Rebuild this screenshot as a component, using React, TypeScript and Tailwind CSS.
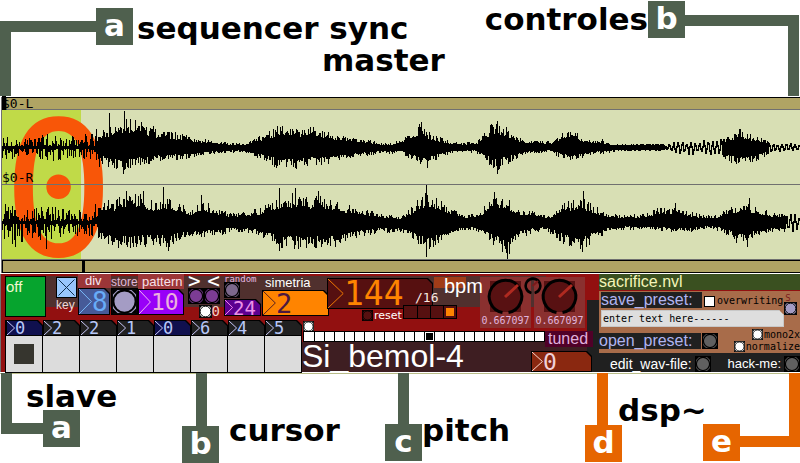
import React, { useState } from "react";

type Point = [number, number];

const MONO = "font-['DejaVu_Sans_Mono','Liberation_Mono',monospace]";
const SANS = "font-['Liberation_Sans',Arial,sans-serif]";

const LEFT_TOP: Point[] = [[0, 10], [20, 9], [40, 12], [60, 11], [80, 10], [90, 14], [100, 16], [107, 18], [115, 24], [135, 26], [150, 18], [165, 14], [180, 13], [195, 8], [210, 7], [230, 4], [245, 3], [255, 9], [265, 12], [275, 19], [285, 22], [295, 21], [303, 15], [312, 20], [322, 16], [335, 12], [350, 9], [365, 7], [380, 4], [390, 4], [400, 6], [410, 14], [420, 21], [430, 13], [440, 9], [450, 5], [460, 4], [476, 5], [484, 15], [490, 21], [497, 24], [505, 19], [515, 10], [525, 6], [535, 6], [550, 5], [555, 8], [560, 13], [575, 14], [582, 9], [590, 6], [602, 7], [610, 3], [640, 3], [662, 3], [680, 6], [700, 6], [720, 8], [731, 12], [739, 17], [745, 14], [755, 10], [765, 7], [775, 4], [800, 3]];
const LEFT_BOTTOM: Point[] = [[0, 10], [20, 9], [40, 11], [60, 13], [80, 10], [95, 11], [110, 18], [124, 22], [135, 18], [150, 14], [165, 12], [180, 11], [195, 8], [215, 5], [240, 4], [255, 9], [265, 12], [275, 18], [285, 20], [295, 21], [310, 16], [320, 17], [335, 12], [350, 9], [365, 8], [380, 5], [400, 5], [410, 10], [420, 16], [430, 15], [440, 9], [450, 5], [475, 4], [483, 10], [490, 17], [497, 21], [505, 16], [515, 11], [525, 6], [550, 4], [560, 9], [572, 13], [580, 10], [590, 7], [605, 5], [620, 3], [660, 3], [680, 7], [700, 7], [720, 9], [735, 15], [745, 16], [755, 12], [765, 8], [775, 4], [800, 3]];
const RIGHT_TOP: Point[] = [[0, 17], [15, 17], [30, 12], [50, 15], [70, 12], [85, 12], [98, 18], [105, 22], [115, 20], [127, 27], [142, 25], [150, 19], [163, 23], [175, 20], [190, 13], [205, 19], [220, 11], [235, 8], [250, 10], [265, 15], [275, 22], [285, 26], [300, 25], [315, 24], [330, 22], [345, 16], [360, 13], [380, 8], [400, 5], [410, 13], [420, 22], [427, 28], [440, 20], [455, 12], [465, 7], [478, 9], [490, 21], [500, 26], [510, 19], [520, 12], [535, 10], [550, 7], [560, 15], [570, 20], [583, 22], [595, 14], [605, 10], [615, 7], [640, 7], [660, 13], [675, 15], [690, 10], [705, 6], [717, 6], [725, 12], [740, 18], [750, 17], [762, 12], [775, 9], [790, 8], [800, 7]];
const RIGHT_BOTTOM: Point[] = [[0, 14], [15, 21], [30, 15], [50, 19], [70, 12], [85, 11], [100, 17], [115, 22], [130, 24], [145, 22], [160, 21], [170, 23], [180, 15], [200, 15], [220, 11], [235, 8], [250, 9], [265, 16], [280, 24], [300, 24], [320, 22], [335, 23], [350, 16], [365, 12], [380, 9], [400, 9], [410, 14], [420, 22], [427, 28], [437, 22], [447, 13], [460, 9], [475, 7], [485, 15], [500, 24], [508, 30], [520, 14], [530, 10], [545, 7], [560, 17], [570, 22], [583, 24], [595, 16], [610, 8], [625, 6], [650, 6], [675, 9], [690, 8], [710, 5], [725, 10], [735, 18], [745, 20], [755, 12], [765, 10], [780, 8], [800, 8]];

const LEFT_SPIKES: Record<number, [number, number]> = { 96: [18, 12], 99: [10, 19], 109: [34, 14], 124: [36, 22], 123: [18, 26], 135: [27, 17], 153: [21, 12], 420: [20, 16], 421: [25, 14], 427: [12, 20], 497: [26, 26], 506: [20, 12], 739: [18, 14] };
const RIGHT_SPIKES: Record<number, [number, number]> = { 15: [12, 24], 46: [10, 26], 126: [31, 22], 143: [31, 14], 163: [35, 20], 168: [18, 28], 201: [27, 14], 279: [34, 28], 295: [34, 22], 318: [31, 18], 426: [37, 34], 507: [16, 37], 494: [30, 18], 582: [14, 29], 583: [31, 18], 675: [19, 8], 747: [15, 24], 749: [24, 12] };

function level(points: Point[], x: number) {
  const i = points.findIndex((p) => p[0] >= x);
  if (i <= 0) return points[i === 0 ? 0 : points.length - 1][1];
  const [x0, y0] = points[i - 1];
  const [x1, y1] = points[i];
  return y0 + ((y1 - y0) * (x - x0)) / (x1 - x0);
}

function wave(top: Point[], bottom: Point[], spikes: Record<number, [number, number]>, centre: number, seed: number, loose: number, thin: (x: number) => boolean) {
  let s = seed;
  const rnd = () => {
    s = (s * 16807) % 2147483647;
    return s / 2147483647;
  };
  let d = "";
  let last = 0;
  for (let x = 2; x < 800; x++) {
    const floor = x < loose ? 0.05 : 0.55;
    let up = level(top, x) * (floor + (1.12 - floor) * Math.pow(rnd(), 1.5));
    let down = level(bottom, x) * (floor + (1.12 - floor) * Math.pow(rnd(), 1.5));
    if (thin(x)) {
      const next = Math.sin(x * 1.45) * level(top, x) * (0.4 + 0.7 * rnd());
      up = Math.max(last, next) + 0.5;
      down = -Math.min(last, next) + 0.5;
      last = next;
    }
    if (spikes[x]) [up, down] = spikes[x];
    d += `M${x - 1.5} ${Math.round(centre - up)}V${Math.round(centre + down) + 1}`;
  }
  return d;
}

const LEFT_WAVE = wave(LEFT_TOP, LEFT_BOTTOM, LEFT_SPIKES, 37, 4211, 98, (x) => (x > 664 && x < 722) || x > 768);
const RIGHT_WAVE = wave(RIGHT_TOP, RIGHT_BOTTOM, RIGHT_SPIKES, 112, 977, 98, (x) => x > 785);

function Badge({ letter, orange }: { letter: string; orange?: boolean }) {
  return (
    <span className={`flex size-[37px] shrink-0 items-center justify-center pb-1 text-[31px] leading-8 font-bold text-white ${orange ? "bg-[#e66500]" : "bg-[#4f604e]"}`}>
      {letter}
    </span>
  );
}

const CUT = "[clip-path:polygon(0_0,calc(100%_-_5px)_0,100%_5px,100%_100%,0_100%)]";

function NumBox({ label, id, value, box, fill, text, arrow }: { label?: string; id?: string; value: string; box: string; fill: string; text: string; arrow: string }) {
  return (
    <span className={`flex shrink-0 bg-black p-px ${CUT} ${box}`}>
      <span className={`flex min-w-0 flex-1 ${CUT} ${fill}`}>
        <svg viewBox="0 0 10 20" preserveAspectRatio="none" className={`h-full shrink-0 ${arrow}`} fill="none" stroke="currentColor" aria-hidden="true">
          <path d="M0 0L9.5 10L0 20" vectorEffect="non-scaling-stroke" />
        </svg>
        <input id={id} aria-label={label} defaultValue={value} className={`h-full w-0 min-w-0 flex-1 bg-transparent p-0 outline-none ${MONO} ${text}`} />
      </span>
    </span>
  );
}

function Bang({ label, id, size, fill }: { label?: string; id?: string; size: string; fill: string }) {
  return (
    <button id={id} aria-label={label} className={`shrink-0 ${size} ${fill}`}>
      <svg viewBox="0 0 16 16" className="block size-full" fill="none" stroke="#000">
        <rect x="0.5" y="0.5" width="15" height="15" strokeWidth="1.3" />
        <circle cx="8" cy="8" r="6.6" strokeWidth="1.2" />
        <path d="M1 4V1H4zM12 1H15V4zM1 12V15H4zM15 12V15H12z" fill="#000" stroke="none" />
      </svg>
    </button>
  );
}

function Knob({ label }: { label: string }) {
  return (
    <label className="relative flex h-[51px] w-[51px] shrink-0 flex-col items-center bg-[#8a302f]">
      <svg viewBox="0 0 51 38" className="h-[38px] w-[51px]" fill="none">
        <rect x="10" y="4" width="31" height="31" fill="#581112" />
        <path d="M22.5 35.5A16.3 16.3 0 1 1 28.5 35.5" stroke="#000" strokeWidth="3" />
        <path d="M25 20L38 8" stroke="#b02a20" strokeWidth="3" />
      </svg>
      <span className={`text-[10px] leading-3 text-[#e0b4dc] ${MONO}`}>0.667097</span>
      <input type="range" aria-label={label} min="0" max="1" step="0.000001" defaultValue="0.667097" className="absolute inset-0 size-full opacity-0" />
    </label>
  );
}

const STEPS = ["0", "2", "2", "1", "0", "6", "4", "5"];

function Steps() {
  return (
    <div className="flex w-[297px] shrink-0 border-l border-black">
      {STEPS.map((n, i) => (
        <div key={i} className="flex w-[37px] flex-col">
          <NumBox
            label={`Step ${i + 1} value`}
            value={n}
            box="h-4 w-full"
            fill={i % 4 === 0 ? "bg-[#10104e]" : "bg-[#202020]"}
            arrow="w-[8px] text-[#c8c8f8]"
            text="text-[17px] leading-4 text-[#b8c8f8]"
          />
          <span className="flex h-[37px] items-center justify-center border-r border-b border-black bg-[#dcdcdc]">
            <input type="checkbox" aria-label={`Step ${i + 1}`} defaultChecked={i === 0} className="size-5 appearance-none checked:bg-[#36352e]" />
          </span>
        </div>
      ))}
    </div>
  );
}

function Sequencer() {
  const [note, setNote] = useState(12);
  return (
    <div className="flex w-[586px] shrink-0 flex-col bg-[#921010] pl-1">
      <div className="flex h-[46px] items-start bg-[linear-gradient(#50302e,#50302e)] bg-[length:541px_31px] bg-[position:0_2px] bg-no-repeat">
        <button className={`mt-0.5 flex h-[41px] w-[41px] shrink-0 items-start border border-black bg-[#06a42e] pt-0.5 text-[15px] leading-4 text-[#f4f8d0] ${SANS}`}>off</button>
        <div className="mt-[3px] ml-2.5 flex w-[22px] shrink-0 flex-col">
          <label htmlFor="key" className="relative block h-[21px] w-[21px] border border-black bg-[#98c6fc]">
            <input id="key" type="checkbox" defaultChecked className="absolute size-full appearance-none opacity-0" />
            <svg viewBox="0 0 19 19" className="block size-full" stroke="#103050"><path d="M1.5 1.5L17.5 17.5M17.5 1.5L1.5 17.5" /></svg>
          </label>
          <label htmlFor="key" className={`text-[12px] leading-[14px] text-[#f0d8d8] ${SANS}`}>key</label>
        </div>
        <div className={`flex w-[33px] shrink-0 flex-col text-[13px] leading-[14px] text-[#f8e8f0] ${SANS}`}>
          <label htmlFor="div" className="h-3.5 bg-[#9c3638] pl-[7px]">div</label>
          <NumBox id="div" value="8" box="h-[27px] w-8" fill="bg-[#465a98]" arrow="w-[13px] text-[#78b8f8]" text="text-[26px] leading-6 text-[#68acf8]" />
        </div>
        <div className={`flex w-[27px] shrink-0 flex-col text-[12px] leading-[14px] whitespace-nowrap text-[#e0b8d8] ${SANS}`}>
          <label htmlFor="store" className="h-3.5 pt-px">store</label>
          <Bang id="store" size="size-[27px]" fill="bg-[#a49cc4]" />
        </div>
        <div className={`flex w-[46px] shrink-0 flex-col text-[13px] leading-[14px] whitespace-nowrap text-[#f8e0e8] ${SANS}`}>
          <label htmlFor="pattern" className="h-[15px] bg-[#9c3638] pt-px pl-1">pattern</label>
          <NumBox id="pattern" value="10" box="h-[26px] w-[46px]" fill="bg-[#9800f8]" arrow="w-[12px] text-[#f0b8f0]" text="text-[23px] leading-6 text-[#ecb0dc]" />
        </div>
        <div className="ml-1 flex w-8 shrink-0 flex-col">
          <span className={`flex h-3.5 items-center justify-between text-[21px] leading-3.5 text-white ${MONO}`}><span>&gt;</span><span>&lt;</span></span>
          <span className="flex">
            <Bang label="Next pattern" size="size-4" fill="bg-[#7c3c94]" />
            <Bang label="Previous pattern" size="size-4" fill="bg-[#7c3c94]" />
          </span>
          <span className={`flex items-center justify-end text-[14px] leading-[14px] text-[#f0d0c8] ${MONO}`}>
            <Bang label="Reset pattern" size="size-[13px]" fill="bg-white" />0
          </span>
        </div>
        <div className="ml-1 flex w-[38px] shrink-0 flex-col">
          <label htmlFor="random" className={`h-2 text-[9px] leading-[10px] text-[#e8b8e0] ${MONO}`}>random</label>
          <Bang label="Random" size="size-4" fill="bg-[#7c688c]" />
          <NumBox id="random" value="24" box="mt-px h-[17px] w-[37px]" fill="bg-[#5c0090]" arrow="w-[8px] text-[#f080f0]" text="text-[19px] leading-4 text-[#ec90e8]" />
        </div>
        <div className="flex w-[67px] shrink-0 flex-col">
          <label htmlFor="simetria" className={`h-4 pt-0.5 pl-[3px] text-[13px] leading-[14px] text-white ${SANS}`}>simetria</label>
          <NumBox id="simetria" value="2" box="h-[26px] w-[67px]" fill="bg-[#ff8400]" arrow="w-[13px] text-[#582020]" text="text-[27px] leading-6 text-[#4c1840]" />
        </div>
        <div className="relative mt-1 -ml-0.5 flex w-[130px] shrink-0 flex-col">
          <NumBox id="bpm" value="144" box="h-[31px] w-[106px]" fill="bg-[#561010]" arrow="w-[16px] text-[#f07800]" text="text-[33px] leading-[30px] text-[#ff8400]" />
          <label htmlFor="reset" className="flex items-center gap-px pl-[35px] text-[11px] leading-[13px] text-white">
            <Bang id="reset" size="size-[11px]" fill="bg-[#561010]" />reset
          </label>
          <span className={`absolute top-[13px] left-[88px] text-[13px] leading-[14px] text-[#f8e8e0] ${MONO}`}>/16</span>
          <div role="radiogroup" aria-label="Division" className="absolute top-[27px] right-0 flex border border-black bg-[#561010]">
            {[4, 8, 12, 16].map((n) => (
              <label key={n} className="flex h-3 w-[13px] items-center justify-center border-l border-black first:border-0">
                <input type="radio" name="division" aria-label={`/${n}`} defaultChecked={n === 16} className="size-2 appearance-none checked:bg-[#ff8400]" />
              </label>
            ))}
          </div>
        </div>
        <div className="mt-[3px] -ml-[23px] flex w-[46px] shrink-0 bg-[linear-gradient(#a03c18,#a03c18)] bg-[length:32px_11px] bg-no-repeat pl-2.5">
          <label htmlFor="bpm" className={`relative z-20 -mt-px text-[20px] leading-5 text-white ${SANS}`}>bpm</label>
        </div>
        <div className="relative z-10 mt-[3px] flex shrink-0 gap-[3px]">
          <Knob label="Left level" />
          <Knob label="Right level" />
          <svg viewBox="0 0 18 18" className="absolute top-0 left-11 size-[18px]" fill="none">
            <path d="M7.4 16A7.3 7.3 0 1 1 10.6 16" stroke="#000" strokeWidth="2.6" />
            <path d="M8.5 9L14 4" stroke="#7a1a1a" strokeWidth="2" />
          </svg>
        </div>
      </div>
      <div className="flex">
        <Steps />
        <div className="flex min-w-0 flex-1 flex-col">
          <div className="pt-px pl-px"><Bang label="Pitch bang" size="block size-[11px]" fill="bg-white" /></div>
          <div className="relative z-10 -mt-px flex h-[11px] items-start pl-px">
            <div role="radiogroup" aria-label="Pitch" className="flex h-[11px] shrink-0 border border-black bg-white">
              {Array.from({ length: 24 }, (_, i) => (
                <label key={i} className="flex h-[9px] w-2.5 items-center justify-center border-l border-black first:border-0">
                  <input type="radio" name="pitch" aria-label={`Note ${i}`} checked={note === i} onChange={() => setNote(i)} className="size-[7px] appearance-none checked:bg-black" />
                </label>
              ))}
            </div>
            <span className={`h-4 shrink-0 bg-[#500028] pr-[5px] pl-[3px] text-[16px] leading-4 text-[#e0b0dc] ${SANS}`}>tuned</span>
          </div>
          <div className="flex h-[30px] items-end justify-between bg-[#3e1e22]">
            <label htmlFor="pitch" className={`relative z-10 text-[32px] leading-8 text-white ${SANS}`}>Si_bemol-4</label>
            <NumBox id="pitch" value="0" box="relative z-10 -mr-[5px] h-[21px] w-[61px]" fill="bg-[#8a2810]" arrow="w-[11px] text-[#f8d8d0]" text="text-[23px] leading-5 text-[#f0d0d8]" />
          </div>
        </div>
      </div>
    </div>
  );
}

function Presets() {
  return (
    <div className="flex min-w-0 flex-1 flex-col overflow-hidden bg-[#202020]">
      <h2 className={`h-[17px] border-b border-[#921010] bg-[#3a5020] text-[16px] leading-4 text-[#f4f4b8] ${SANS}`}>sacrifice.nvl</h2>
      <div className={`flex h-[62px] flex-col bg-[#a86c4a] text-[10px] text-black ${MONO}`}>
        <div className="flex h-[19px] items-start pt-px pl-0.5">
          <span className={`h-4 w-[101px] shrink-0 bg-[#202020] text-[16px] leading-4 text-[#b0b4f0] ${SANS}`}>save_preset:</span>
          <input id="overwrite" type="checkbox" className="mt-1 ml-0.5 size-[11px] shrink-0 appearance-none border border-black bg-white" />
          <label htmlFor="overwrite" className="mt-[3px] ml-0.5 leading-3">overwriting</label>
          <label htmlFor="save" className="ml-0.5 text-[9px] leading-3 text-[#7c1c1c]">S</label>
        </div>
        <div className="flex h-[23px] items-start pl-0.5">
          <input aria-label="Preset name" defaultValue="enter_text_here------" className={`h-[17px] w-[183px] shrink-0 border border-[#c8c8c8] bg-[#dedede] pl-px text-[10px] leading-[15px] text-black ${CUT}`} />
          <Bang id="save" size="-mt-2 size-[13px]" fill="bg-[#a49cc4]" />
        </div>
        <div className="flex">
          <label htmlFor="open" className={`h-4 w-[102px] shrink-0 bg-[#202020] text-[16px] leading-4 text-[#b0b4f0] ${SANS}`}>open_preset:</label>
          <Bang id="open" size="ml-px size-4" fill="bg-[#606060]" />
          <div className="-mt-1 flex flex-1 flex-col items-end">
            <label htmlFor="mono" className="flex items-center gap-px leading-[11px]">
              <Bang id="mono" size="size-[11px]" fill="bg-white" />mono2x
            </label>
            <label htmlFor="normalize" className="flex items-center gap-px pt-px leading-[11px]">
              <Bang id="normalize" size="size-[11px]" fill="bg-white" />normalize
            </label>
          </div>
        </div>
      </div>
      <div className={`flex items-center justify-between pt-[3px] pl-[11px] text-white ${SANS}`}>
        <label htmlFor="edit" className="flex items-center gap-[3px] text-[14px] leading-4">edit_wav-file:<Bang id="edit" size="size-4" fill="bg-[#606060]" /></label>
        <label htmlFor="hack" className="flex items-center gap-[3px] text-[13px] leading-4">hack-me:<Bang id="hack" size="size-4" fill="bg-[#606060]" /></label>
      </div>
    </div>
  );
}

export default function App() {
  return (
    <main className="flex w-full flex-col overflow-hidden bg-white font-['DejaVu_Sans',sans-serif] text-black">
      <header className="flex h-[97px] items-start justify-between text-[31px] leading-8 font-bold whitespace-nowrap">
        <div className="flex items-start">
          <span className="mt-[21px] h-[75px] w-24 border-t-[11px] border-l-[11px] border-[#4f604e]" />
          <span className="mt-2"><Badge letter="a" /></span>
          <h1 className="mt-3 w-0 pl-1">sequencer sync<br /><span className="pl-[185px]">master</span></h1>
        </div>
        <div className="flex items-start pr-px">
          <p className="mt-[3px]">controles</p>
          <span className="mt-px"><Badge letter="b" /></span>
          <span className="mt-[15px] h-[81px] w-[114px] border-t-[11px] border-r-[11px] border-[#4f604e]" />
        </div>
      </header>

      <section aria-label="Waveform" className="border-l border-white">
        <div className="border-l border-[#707070]">
          <div className={`h-[13px] border-t border-b border-t-black border-b-[#707070] bg-[#b0a464] text-[13px] leading-[11px] ${MONO}`}>
            <span className="border-l-4 border-black"><span className="-ml-1">$0-L</span></span>
          </div>
          <div className="relative flex h-[149px] bg-[#d8dfb4]">
            <div className="w-[79px] bg-[#c0da48]" />
            <span className={`absolute top-[-30px] left-0 text-[188px] leading-[220px] text-[#f85608] ${MONO}`}>0</span>
            <svg viewBox="0 0 798 149" preserveAspectRatio="none" className="absolute inset-0 size-full" stroke="#000" shapeRendering="crispEdges" aria-hidden="true">
              <path d="M0 74.5H798" stroke="#707070" />
              <path d={LEFT_WAVE} />
              <path d={RIGHT_WAVE} />
            </svg>
            <span className={`absolute top-[61px] left-0 text-[13px] leading-[13px] ${MONO}`}>$0-R</span>
          </div>
          <div className="flex h-3.5 border-t border-[#707070]">
            <div className="flex-1 border-y border-l border-black bg-[#b0a464] pl-[79px]">
              <div className="h-full w-[3px] bg-black" />
            </div>
          </div>
        </div>
      </section>

      <section aria-label="Controls" className="mt-px flex h-[98px] border-l border-[#707070]">
        <Sequencer />
        <div className="w-3 shrink-0 border-t-[26px] border-[#921010] bg-[#202020]" />
        <Presets />
      </section>

      <footer className="relative mt-px h-[90px] border-t border-[#b8bc88] text-[31px] leading-8 font-bold whitespace-nowrap">
        <span className="absolute -top-px left-px h-[61px] w-[42px] border-b-[11px] border-l-[11px] border-[#4f604e]" />
        <span className="absolute top-[36px] left-[43px]"><Badge letter="a" /></span>
        <p className="absolute top-[6px] left-[26px]">slave</p>

        <span className="absolute -top-px left-[196px] h-[54px] w-[11px] bg-[#4f604e]" />
        <span className="absolute top-[52px] left-[182px]"><Badge letter="b" /></span>
        <p className="absolute top-[40px] left-[229px]">cursor</p>

        <span className="absolute -top-px left-[398px] h-[54px] w-[11px] bg-[#4f604e]" />
        <span className="absolute top-[50px] left-[385px]"><Badge letter="c" /></span>
        <p className="absolute top-[40px] left-[422px]">pitch</p>

        <span className="absolute -top-px left-[597px] h-[54px] w-[11px] bg-[#e66500]" />
        <span className="absolute top-[51px] left-[585px]"><Badge letter="d" orange /></span>
        <p className="absolute top-[20px] left-[618px]">dsp~</p>

        <span className="absolute -top-px right-0 h-[74px] w-[60px] border-r-[11px] border-b-[11px] border-[#e66500]" />
        <span className="absolute top-[50px] right-[60px]"><Badge letter="e" orange /></span>
      </footer>
    </main>
  );
}
